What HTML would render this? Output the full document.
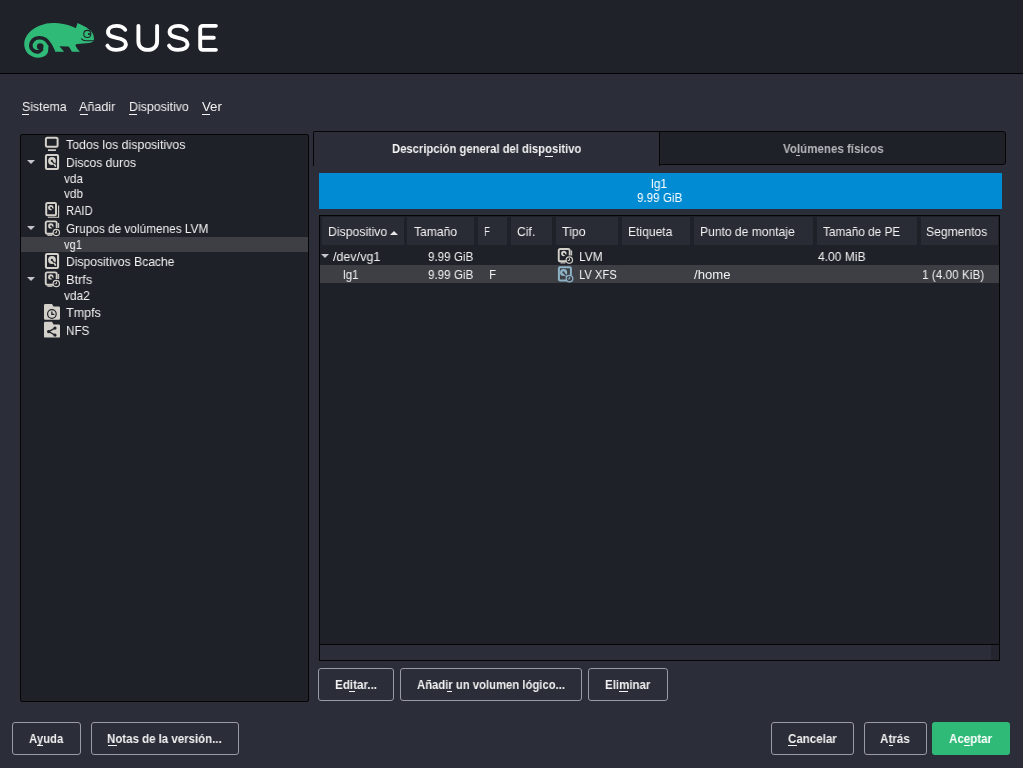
<!DOCTYPE html>
<html><head><meta charset="utf-8"><style>
html,body{margin:0;padding:0;width:1023px;height:768px;overflow:hidden;background:#2b2d38;font-family:"Liberation Sans",sans-serif}
.r{position:absolute}
.t{position:absolute;white-space:pre;transform-origin:0 0;will-change:transform}
</style></head><body>
<div class="r" style="left:0px;top:0px;width:1023px;height:73px;background:#20222a"></div><div class="r" style="left:0px;top:73px;width:1023px;height:1px;background:#030306"></div><svg class="r" style="left:0;top:0" width="230" height="70" viewBox="0 0 230 70">
<path d="M24.2,44 C24.3,36 31,29 40,25.6 C44.5,23.9 48.5,23.1 52.8,23.1 C60,23.1 70,25 75.9,28.2 L77.5,23.1 C82,25 86,27 89,29.5 C92,31.5 93.5,34 93.8,37 L94,40.5 C93,42 91,43 89,43.1 L77.4,44 C75.5,44.5 75.4,45 75.4,45 C75.8,46.8 78,50 80.1,51.8 L71.9,51.8 C70.5,49.5 69.5,47.5 68.4,46.6 L59.4,46.3 C61,48 62.5,50 64.1,51.8 L55.1,51.8 L48.1,51.8 C47.3,54.5 44.5,57.7 38.2,57.7 C30,57.7 24.2,51.5 24.2,44 Z" fill="#30ba78"/>
<path d="M53.20,51.50 C52.70,50.45 51.48,47.20 50.20,45.20 C48.92,43.20 47.38,40.74 45.50,39.50 C43.62,38.26 40.97,37.65 38.90,37.75 C36.83,37.85 34.45,38.74 33.10,40.10 C31.75,41.46 30.78,44.18 30.80,45.90 C30.82,47.62 31.95,49.42 33.20,50.40 C34.45,51.38 36.92,51.95 38.30,51.80 C39.68,51.65 40.97,49.88 41.50,49.50" fill="none" stroke="#20222a" stroke-width="3.7" stroke-linecap="round" stroke-linejoin="round"/>
<circle cx="40.2" cy="46.6" r="3.3" fill="#20222a"/>
<path d="M51.9,46 L55.3,51.9 L48.1,51.9 L48.4,46.5 Z" fill="#20222a"/>
<circle cx="87.3" cy="33.9" r="3.55" fill="none" stroke="#20222a" stroke-width="1.05"/>
<circle cx="88.9" cy="34.1" r="1.0" fill="#20222a"/><path d="M88.9,34.1 L90.5,34.1" stroke="#20222a" stroke-width="1.2"/>
<path d="M81.3,38.6 C82.5,40.2 84,40.8 86,40.8 L94,40.8" fill="none" stroke="#20222a" stroke-width="1.1"/>
<g fill="none" stroke="#ffffff" stroke-width="3.9" stroke-linecap="round" stroke-linejoin="round">
<path d="M125.2,29.8 C123.5,27.2 120.5,25.85 116.6,25.85 C111.6,25.85 108,28.4 108,32 C108,35.8 111.5,36.8 116.6,37.8 C122.2,38.9 125.9,40.5 125.9,44.1 C125.9,47.7 122.2,49.85 116.6,49.85 C112.2,49.85 108.9,48.3 107.4,45.6"/>
<path d="M138.4,25.85 L138.4,41.2 C138.4,46.5 142,49.85 147.75,49.85 C153.5,49.85 157.1,46.5 157.1,41.2 L157.1,25.85"/>
<path transform="translate(61.6,0)" d="M125.2,29.8 C123.5,27.2 120.5,25.85 116.6,25.85 C111.6,25.85 108,28.4 108,32 C108,35.8 111.5,36.8 116.6,37.8 C122.2,38.9 125.9,40.5 125.9,44.1 C125.9,47.7 122.2,49.85 116.6,49.85 C112.2,49.85 108.9,48.3 107.4,45.6"/>
<path d="M215.9,25.85 L203,25.85 Q200.2,25.85 200.2,28.7 L200.2,47 Q200.2,49.85 203,49.85 L215.9,49.85 M200.2,37.8 L213.8,37.8"/>
</g>
</svg><div class="r" style="left:20px;top:134px;width:289px;height:568px;background:#1f2129;border:1px solid #050506;box-sizing:border-box;border-radius:2px"></div><div class="r" style="left:21px;top:237px;width:287px;height:15px;background:#3e3f45"></div><div class="r" style="left:313px;top:131px;width:347px;height:35px;background:#2b2d38;border:1px solid #050506;border-bottom:none;box-sizing:border-box;border-radius:2px 2px 0 0"></div><div class="r" style="left:659px;top:131px;width:347px;height:34px;background:#1f2129;border:1.5px solid #050506;box-sizing:border-box;border-radius:0 3px 3px 0"></div><div class="r" style="left:319px;top:173px;width:683px;height:36px;background:#018bd3"></div><div class="r" style="left:319px;top:215px;width:681px;height:446px;background:#1f2129;border:1px solid #050506;box-sizing:border-box"></div><div class="r" style="left:322px;top:217px;width:82px;height:28px;background:#292b35"></div><div class="r" style="left:407px;top:217px;width:67px;height:28px;background:#292b35"></div><div class="r" style="left:478px;top:217px;width:29px;height:28px;background:#292b35"></div><div class="r" style="left:511px;top:217px;width:41px;height:28px;background:#292b35"></div><div class="r" style="left:556px;top:217px;width:62px;height:28px;background:#292b35"></div><div class="r" style="left:622px;top:217px;width:68px;height:28px;background:#292b35"></div><div class="r" style="left:694px;top:217px;width:119px;height:28px;background:#292b35"></div><div class="r" style="left:817px;top:217px;width:100px;height:28px;background:#292b35"></div><div class="r" style="left:921px;top:217px;width:77px;height:28px;background:#292b35"></div><div class="r" style="left:320px;top:265px;width:679px;height:18px;background:#3e3f45"></div><div class="r" style="left:320px;top:644px;width:679px;height:16px;background:#2b2d38;border-top:1px solid #050506;box-sizing:border-box"></div><div class="r" style="left:991px;top:645px;width:8px;height:15px;background:#24262f"></div><div class="r" style="left:318px;top:668px;width:76px;height:33px;background:transparent;border:1px solid #9a9ba3;box-sizing:border-box;border-radius:3px"></div><div class="r" style="left:400px;top:668px;width:182px;height:33px;background:transparent;border:1px solid #9a9ba3;box-sizing:border-box;border-radius:3px"></div><div class="r" style="left:588px;top:668px;width:80px;height:33px;background:transparent;border:1px solid #9a9ba3;box-sizing:border-box;border-radius:3px"></div><div class="r" style="left:12px;top:722px;width:69px;height:33px;background:transparent;border:1px solid #9a9ba3;box-sizing:border-box;border-radius:3px"></div><div class="r" style="left:91px;top:722px;width:148px;height:33px;background:transparent;border:1px solid #9a9ba3;box-sizing:border-box;border-radius:3px"></div><div class="r" style="left:771px;top:722px;width:83px;height:33px;background:transparent;border:1px solid #9a9ba3;box-sizing:border-box;border-radius:3px"></div><div class="r" style="left:864px;top:722px;width:63px;height:33px;background:transparent;border:1px solid #9a9ba3;box-sizing:border-box;border-radius:3px"></div><div class="r" style="left:932px;top:722px;width:78px;height:33px;background:#30ba78;border:none;box-sizing:border-box;border-radius:3px"></div><div class="r" style="left:27px;top:160.0px;width:0;height:0;border-left:4px solid transparent;border-right:4px solid transparent;border-top:4.2px solid #c4c5ca"></div><div class="r" style="left:27px;top:226.0px;width:0;height:0;border-left:4px solid transparent;border-right:4px solid transparent;border-top:4.2px solid #c4c5ca"></div><div class="r" style="left:27px;top:277.0px;width:0;height:0;border-left:4px solid transparent;border-right:4px solid transparent;border-top:4.2px solid #c4c5ca"></div><div class="r" style="left:320.5px;top:253.6px;width:0;height:0;border-left:4.4px solid transparent;border-right:4.4px solid transparent;border-top:4.2px solid #c4c5ca"></div><div class="r" style="left:390px;top:231px;width:0;height:0;border-left:4px solid transparent;border-right:4px solid transparent;border-bottom:4px solid #e8e8e8"></div><svg class="r" style="left:0;top:0" width="1023" height="768"><rect x="45.9" y="137.8" width="11.7" height="9.0" rx="1.5" fill="none" stroke="#d3d0c9" stroke-width="2"/><rect x="48.0" y="149.3" width="7.9" height="1.7" fill="#d3d0c9"/><rect x="45.949999999999996" y="155.05" width="12.1" height="13.9" rx="1.2" fill="none" stroke="#d3d0c9" stroke-width="2.1"/><circle cx="52.0" cy="161.0" r="3.9" fill="#d3d0c9"/><circle cx="51.8" cy="160.9" r="1.05" fill="#1f2129"/><path d="M51.9,161.0 L55.8,165.4" stroke="#1f2129" stroke-width="1.3"/><path d="M54.5,164.6 L55.4,166.0" stroke="#d3d0c9" stroke-width="1.7" stroke-linecap="round"/><rect x="46.199999999999996" y="203.0" width="9.8" height="12.2" rx="1.2" fill="none" stroke="#d3d0c9" stroke-width="2"/><circle cx="50.8" cy="207.6" r="2.7" fill="#d3d0c9"/><circle cx="51.0" cy="207.79999999999998" r="0.95" fill="#1f2129"/><path d="M51.0,207.79999999999998 L53.8,210.6" stroke="#1f2129" stroke-width="1.4"/><path d="M58.599999999999994,205.5 L58.599999999999994,217.3 L47.9,217.3" fill="none" stroke="#d3d0c9" stroke-width="1.1"/><path d="M53.4,233.7 L47.3,233.7 Q45.75,233.7 45.75,232.1 L45.75,222.9 Q45.75,221.35 47.3,221.35 L55.099999999999994,221.35 Q56.7,221.35 56.7,222.9 L56.7,228.0" fill="none" stroke="#d3d0c9" stroke-width="1.9"/><circle cx="50.8" cy="225.9" r="2.7" fill="#d3d0c9"/><circle cx="51.0" cy="226.1" r="0.95" fill="#1f2129"/><path d="M51.0,226.1 L53.8,228.9" stroke="#1f2129" stroke-width="1.4"/><path d="M58.599999999999994,223.0 L58.599999999999994,228.0" stroke="#d3d0c9" stroke-width="1.1"/><path d="M47.4,235.3 L52.4,235.3" stroke="#d3d0c9" stroke-width="1.1"/><circle cx="56.3" cy="232.5" r="3.2" fill="#1f2129" stroke="#d3d0c9" stroke-width="1.2"/><path d="M56.5,230.7 L56.5,232.8 L54.7,232.8" fill="none" stroke="#d3d0c9" stroke-width="1"/><rect x="45.949999999999996" y="254.05" width="12.1" height="13.9" rx="1.2" fill="none" stroke="#d3d0c9" stroke-width="2.1"/><circle cx="52.0" cy="260.0" r="3.9" fill="#d3d0c9"/><circle cx="51.8" cy="259.9" r="1.05" fill="#1f2129"/><path d="M51.9,260.0 L55.8,264.4" stroke="#1f2129" stroke-width="1.3"/><path d="M54.5,263.6 L55.4,265.0" stroke="#d3d0c9" stroke-width="1.7" stroke-linecap="round"/><path d="M53.4,284.7 L47.3,284.7 Q45.75,284.7 45.75,283.1 L45.75,273.9 Q45.75,272.35 47.3,272.35 L55.099999999999994,272.35 Q56.7,272.35 56.7,273.9 L56.7,279.0" fill="none" stroke="#d3d0c9" stroke-width="1.9"/><circle cx="50.8" cy="276.9" r="2.7" fill="#d3d0c9"/><circle cx="51.0" cy="277.09999999999997" r="0.95" fill="#1f2129"/><path d="M51.0,277.09999999999997 L53.8,279.9" stroke="#1f2129" stroke-width="1.4"/><path d="M58.599999999999994,274.0 L58.599999999999994,279.0" stroke="#d3d0c9" stroke-width="1.1"/><path d="M47.4,286.3 L52.4,286.3" stroke="#d3d0c9" stroke-width="1.1"/><circle cx="56.3" cy="283.5" r="3.2" fill="#1f2129" stroke="#d3d0c9" stroke-width="1.2"/><path d="M56.5,281.7 L56.5,283.8 L54.7,283.8" fill="none" stroke="#d3d0c9" stroke-width="1"/><path d="M44,305.2 Q44,304 45.2,304 L52,304 L53.5,306.6 L58.8,306.6 Q60,306.6 60,307.8 L60,318.6 Q60,319.8 58.8,319.8 L45.2,319.8 Q44,319.8 44,318.6 Z" fill="#d3d0c9"/><circle cx="51.9" cy="314" r="4.3" fill="none" stroke="#1f2129" stroke-width="1.2"/><path d="M51.9,311.4 L51.9,314.3 L54.3,314.3" fill="none" stroke="#1f2129" stroke-width="1.3"/><path d="M44,323.0 Q44,321.8 45.2,321.8 L52,321.8 L53.5,324.40000000000003 L58.8,324.40000000000003 Q60,324.40000000000003 60,325.6 L60,336.40000000000003 Q60,337.6 58.8,337.6 L45.2,337.6 Q44,337.6 44,336.40000000000003 Z" fill="#d3d0c9"/><path d="M55,328.1 L48.6,331.6 L55,335.1" fill="none" stroke="#1f2129" stroke-width="1.2"/><circle cx="55" cy="328.1" r="1.6" fill="#1f2129"/><circle cx="48.6" cy="331.6" r="1.6" fill="#1f2129"/><circle cx="55" cy="335.1" r="1.6" fill="#1f2129"/><path d="M566.4,261.3 L560.3,261.3 Q558.75,261.3 558.75,259.7 L558.75,250.5 Q558.75,248.95 560.3,248.95 L568.1,248.95 Q569.6999999999999,248.95 569.6999999999999,250.5 L569.6999999999999,255.6" fill="none" stroke="#d3d0c9" stroke-width="1.9"/><circle cx="563.8" cy="253.5" r="2.7" fill="#d3d0c9"/><circle cx="564.0" cy="253.7" r="0.95" fill="#1f2129"/><path d="M564.0,253.7 L566.8,256.5" stroke="#1f2129" stroke-width="1.4"/><path d="M571.6,250.6 L571.6,255.6" stroke="#d3d0c9" stroke-width="1.1"/><path d="M560.4,262.9 L565.4,262.9" stroke="#d3d0c9" stroke-width="1.1"/><circle cx="569.3" cy="260.1" r="3.2" fill="#1f2129" stroke="#d3d0c9" stroke-width="1.2"/><path d="M569.5,258.3 L569.5,260.4 L567.6999999999999,260.4" fill="none" stroke="#d3d0c9" stroke-width="1"/><path d="M566.6999999999999,280.5 L560.1,280.5 Q558.9,280.5 558.9,279.3 L558.9,268.5 Q558.9,267.3 560.1,267.3 L569.6999999999999,267.3 Q570.9,267.3 570.9,268.5 L570.9,275.1" fill="none" stroke="#8db3c6" stroke-width="2"/><circle cx="563.6" cy="272.50000000000006" r="3.6" fill="#8db3c6"/><circle cx="563.4" cy="272.40000000000003" r="1.05" fill="#3e3f45"/><path d="M563.5,272.50000000000006 L567.4,276.90000000000003" stroke="#3e3f45" stroke-width="1.3"/><path d="M566.1,276.1 L567.0,277.50000000000006" stroke="#8db3c6" stroke-width="1.7" stroke-linecap="round"/><circle cx="569.5" cy="278.6" r="3.3" fill="#3e3f45" stroke="#8db3c6" stroke-width="1.3"/><path d="M569.6999999999999,276.7 L569.6999999999999,278.90000000000003 L567.8,278.90000000000003" fill="none" stroke="#8db3c6" stroke-width="1"/></svg><span class="t" style="left:21.50px;top:100.40px;font-size:13px;line-height:13px;font-weight:400;color:#f2f2f2;transform:scaleX(0.9496)">Sistema</span><div class="r" style="left:22px;top:113.6px;width:7px;height:1px;background:#f2f2f2"></div><span class="t" style="left:79.40px;top:100.40px;font-size:13px;line-height:13px;font-weight:400;color:#f2f2f2;transform:scaleX(0.9633)">Añadir</span><div class="r" style="left:80px;top:113.6px;width:8px;height:1px;background:#f2f2f2"></div><span class="t" style="left:128.80px;top:100.40px;font-size:13px;line-height:13px;font-weight:400;color:#f2f2f2;transform:scaleX(0.9529)">Dispositivo</span><div class="r" style="left:129px;top:113.6px;width:8px;height:1px;background:#f2f2f2"></div><span class="t" style="left:201.50px;top:100.40px;font-size:13px;line-height:13px;font-weight:400;color:#f2f2f2;transform:scaleX(1.0197)">Ver</span><div class="r" style="left:202px;top:113.6px;width:8px;height:1px;background:#f2f2f2"></div><span class="t" style="left:65.70px;top:138.20px;font-size:13px;line-height:13px;font-weight:400;color:#f2f2f2;transform:scaleX(0.9496)">Todos los dispositivos</span><span class="t" style="left:65.70px;top:156.20px;font-size:13px;line-height:13px;font-weight:400;color:#f2f2f2;transform:scaleX(0.9303)">Discos duros</span><span class="t" style="left:64.30px;top:171.80px;font-size:13px;line-height:13px;font-weight:400;color:#f2f2f2;transform:scaleX(0.9061)">vda</span><span class="t" style="left:64.30px;top:186.80px;font-size:13px;line-height:13px;font-weight:400;color:#f2f2f2;transform:scaleX(0.9061)">vdb</span><span class="t" style="left:65.70px;top:204.20px;font-size:13px;line-height:13px;font-weight:400;color:#f2f2f2;transform:scaleX(0.8531)">RAID</span><span class="t" style="left:65.70px;top:222.20px;font-size:13px;line-height:13px;font-weight:400;color:#f2f2f2;transform:scaleX(0.9089)">Grupos de volúmenes LVM</span><span class="t" style="left:64.30px;top:237.80px;font-size:13px;line-height:13px;font-weight:400;color:#f2f2f2;transform:scaleX(0.8584)">vg1</span><span class="t" style="left:65.70px;top:255.20px;font-size:13px;line-height:13px;font-weight:400;color:#f2f2f2;transform:scaleX(0.9327)">Dispositivos Bcache</span><span class="t" style="left:65.70px;top:273.20px;font-size:13px;line-height:13px;font-weight:400;color:#f2f2f2;transform:scaleX(0.9800)">Btrfs</span><span class="t" style="left:64.30px;top:288.80px;font-size:13px;line-height:13px;font-weight:400;color:#f2f2f2;transform:scaleX(0.9148)">vda2</span><span class="t" style="left:65.70px;top:306.20px;font-size:13px;line-height:13px;font-weight:400;color:#f2f2f2;transform:scaleX(0.9661)">Tmpfs</span><span class="t" style="left:65.70px;top:324.20px;font-size:13px;line-height:13px;font-weight:400;color:#f2f2f2;transform:scaleX(0.9000)">NFS</span><span class="t" style="left:391.70px;top:142.30px;font-size:13px;line-height:13px;font-weight:700;color:#f2f2f2;transform:scaleX(0.8648)">Descripción general del dispositivo</span><div class="r" style="left:545px;top:155.5px;width:8px;height:1px;background:#f2f2f2"></div><span class="t" style="left:782.50px;top:142.00px;font-size:13px;line-height:13px;font-weight:700;color:#b6b7bb;transform:scaleX(0.8888)">Volúmenes físicos</span><div class="r" style="left:796px;top:155.2px;width:4px;height:1px;background:#b6b7bb"></div><span class="t" style="left:650.90px;top:177.00px;font-size:13px;line-height:13px;font-weight:400;color:#ffffff;transform:scaleX(0.9332)">lg1</span><span class="t" style="left:637.40px;top:190.50px;font-size:13px;line-height:13px;font-weight:400;color:#ffffff;transform:scaleX(0.8934)">9.99 GiB</span><span class="t" style="left:327.70px;top:225.00px;font-size:13px;line-height:13px;font-weight:400;color:#f2f2f2;transform:scaleX(0.9434)">Dispositivo</span><span class="t" style="left:414.10px;top:225.00px;font-size:13px;line-height:13px;font-weight:400;color:#f2f2f2;transform:scaleX(0.9319)">Tamaño</span><span class="t" style="left:484.40px;top:225.00px;font-size:13px;line-height:13px;font-weight:400;color:#f2f2f2;transform:scaleX(0.7418)">F</span><span class="t" style="left:516.70px;top:225.00px;font-size:13px;line-height:13px;font-weight:400;color:#f2f2f2;transform:scaleX(0.9333)">Cif.</span><span class="t" style="left:562.20px;top:225.00px;font-size:13px;line-height:13px;font-weight:400;color:#f2f2f2;transform:scaleX(0.9552)">Tipo</span><span class="t" style="left:627.60px;top:225.00px;font-size:13px;line-height:13px;font-weight:400;color:#f2f2f2;transform:scaleX(0.9287)">Etiqueta</span><span class="t" style="left:699.70px;top:225.00px;font-size:13px;line-height:13px;font-weight:400;color:#f2f2f2;transform:scaleX(0.9293)">Punto de montaje</span><span class="t" style="left:823.00px;top:225.00px;font-size:13px;line-height:13px;font-weight:400;color:#f2f2f2;transform:scaleX(0.9052)">Tamaño de PE</span><span class="t" style="left:926.40px;top:225.00px;font-size:13px;line-height:13px;font-weight:400;color:#f2f2f2;transform:scaleX(0.9306)">Segmentos</span><span class="t" style="left:332.70px;top:250.00px;font-size:13px;line-height:13px;font-weight:400;color:#f2f2f2;transform:scaleX(0.9622)">/dev/vg1</span><span class="t" style="left:427.80px;top:250.00px;font-size:13px;line-height:13px;font-weight:400;color:#f2f2f2;transform:scaleX(0.8934)">9.99 GiB</span><span class="t" style="left:578.90px;top:250.00px;font-size:13px;line-height:13px;font-weight:400;color:#f2f2f2;transform:scaleX(0.9121)">LVM</span><span class="t" style="left:817.60px;top:250.00px;font-size:13px;line-height:13px;font-weight:400;color:#f2f2f2;transform:scaleX(0.9257)">4.00 MiB</span><span class="t" style="left:342.60px;top:267.90px;font-size:13px;line-height:13px;font-weight:400;color:#f2f2f2;transform:scaleX(0.8986)">lg1</span><span class="t" style="left:427.80px;top:267.90px;font-size:13px;line-height:13px;font-weight:400;color:#f2f2f2;transform:scaleX(0.8934)">9.99 GiB</span><span class="t" style="left:488.80px;top:267.90px;font-size:13px;line-height:13px;font-weight:400;color:#f2f2f2;transform:scaleX(0.8927)">F</span><span class="t" style="left:578.90px;top:267.90px;font-size:13px;line-height:13px;font-weight:400;color:#f2f2f2;transform:scaleX(0.8599)">LV XFS</span><span class="t" style="left:694.10px;top:267.90px;font-size:13px;line-height:13px;font-weight:400;color:#f2f2f2;transform:scaleX(1.0099)">/home</span><span class="t" style="left:922.40px;top:267.90px;font-size:13px;line-height:13px;font-weight:400;color:#f2f2f2;transform:scaleX(0.9060)">1 (4.00 KiB)</span><span class="t" style="left:334.70px;top:677.90px;font-size:13px;line-height:13px;font-weight:700;color:#f2f2f2;transform:scaleX(0.8963)">Editar...</span><div class="r" style="left:349px;top:691.1px;width:6px;height:1px;background:#f2f2f2"></div><span class="t" style="left:416.80px;top:677.90px;font-size:13px;line-height:13px;font-weight:700;color:#f2f2f2;transform:scaleX(0.8682)">Añadir un volumen lógico...</span><div class="r" style="left:447px;top:691.1px;width:5px;height:1px;background:#f2f2f2"></div><span class="t" style="left:605.20px;top:677.90px;font-size:13px;line-height:13px;font-weight:700;color:#f2f2f2;transform:scaleX(0.8850)">Eliminar</span><div class="r" style="left:619px;top:691.1px;width:9px;height:1px;background:#f2f2f2"></div><span class="t" style="left:29.30px;top:731.80px;font-size:13px;line-height:13px;font-weight:700;color:#f2f2f2;transform:scaleX(0.8739)">Ayuda</span><div class="r" style="left:37px;top:745.0px;width:6px;height:1px;background:#f2f2f2"></div><span class="t" style="left:107.30px;top:731.80px;font-size:13px;line-height:13px;font-weight:700;color:#f2f2f2;transform:scaleX(0.8820)">Notas de la versión...</span><div class="r" style="left:108px;top:745.0px;width:9px;height:1px;background:#f2f2f2"></div><span class="t" style="left:787.80px;top:731.80px;font-size:13px;line-height:13px;font-weight:700;color:#f2f2f2;transform:scaleX(0.8885)">Cancelar</span><div class="r" style="left:788px;top:745.0px;width:9px;height:1px;background:#f2f2f2"></div><span class="t" style="left:880.40px;top:731.80px;font-size:13px;line-height:13px;font-weight:700;color:#f2f2f2;transform:scaleX(0.8962)">Atrás</span><div class="r" style="left:889px;top:745.0px;width:4px;height:1px;background:#f2f2f2"></div><span class="t" style="left:949.10px;top:731.80px;font-size:13px;line-height:13px;font-weight:700;color:#ffffff;transform:scaleX(0.8922)">Aceptar</span><div class="r" style="left:964px;top:745.0px;width:6px;height:1px;background:#ffffff"></div>
</body></html>
